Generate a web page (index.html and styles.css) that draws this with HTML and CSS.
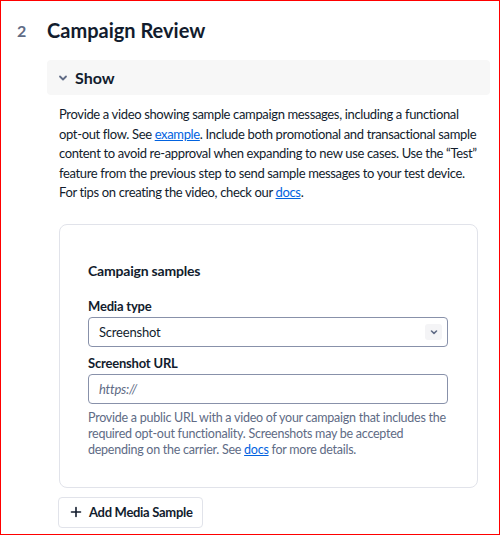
FILE: index.html
```html
<!DOCTYPE html>
<html>
<head>
<meta charset="utf-8">
<link rel="stylesheet" href="styles.css">
</head>
<body>
<div class="frame">
  <div class="step">
    <div class="step-num">2</div>
    <div class="step-body">
      <h2 class="step-title">Campaign Review</h2>
      <div class="disclosure">
        <svg class="chev" width="10" height="10" viewBox="0 0 10 10"><path d="M2 3.5 L5 6.5 L8 3.5" fill="none" stroke="#606b85" stroke-width="1.8" stroke-linecap="round" stroke-linejoin="round"/></svg>
        <span class="disclosure-label">Show</span>
      </div>
      <div class="content">
        <p class="intro">Provide a video showing sample campaign messages, including a functional opt-out flow. See <a href="#">example</a>. Include both promotional and transactional sample content to avoid re-approval when expanding to new use cases. Use the “Test” feature from the previous step to send sample messages to your test device. For tips on creating the video, check our <a href="#">docs</a>.</p>
        <div class="card">
          <div class="card-title">Campaign samples</div>
          <label class="label">Media type</label>
          <div class="select">
            <span>Screenshot</span>
            <span class="select-chev"><svg width="10" height="10" viewBox="0 0 10 10"><path d="M2.5 4 L5 6.3 L7.5 4" fill="none" stroke="#606b85" stroke-width="1.6" stroke-linecap="round" stroke-linejoin="round"/></svg></span>
          </div>
          <label class="label label-2">Screenshot URL</label>
          <div class="input"><span class="placeholder">https://</span></div>
          <p class="help">Provide a public URL with a video of your campaign that includes the required opt-out functionality. Screenshots may be accepted depending on the carrier. See <a href="#">docs</a> for more details.</p>
        </div>
        <button class="btn"><svg width="12" height="12" viewBox="0 0 12 12"><path d="M6 1.5 V10.5 M1.5 6 H10.5" stroke="#121c2d" stroke-width="1.6" stroke-linecap="round"/></svg><span>Add Media Sample</span></button>
      </div>
    </div>
  </div>
</div>
</body>
</html>
```
FILE: styles.css
```css
* { box-sizing: border-box; }
html, body { margin: 0; padding: 0; }
body { font-family: Lato, "Liberation Sans", sans-serif; color: #121c2d; }
.frame {
  width: 500px;
  height: 535px;
  border: 1px solid #ff0000;
  overflow: hidden;
  padding: 14px 9px 0 16px;
}
.step { display: flex; }
.step-num {
  width: 30px;
  font-size: 16px;
  font-weight: 700;
  color: #606b85;
  padding-top: 6px;
}
.step-body { flex: 1; }
.step-title {
  margin: 0;
  font-size: 20px;
  font-weight: 700;
  line-height: 30px;
  color: #121c2d;
}
.disclosure {
  margin-top: 15px;
  height: 35px;
  background: #f7f7f7;
  border-radius: 4px;
  display: flex;
  align-items: center;
  padding-left: 11px;
  gap: 7px;
}
.chev { display: block; }
.disclosure-label { font-size: 16px; font-weight: 700; }
.content { padding-left: 12px; padding-right: 12px; }
.intro {
  margin: 10px 0 0;
  font-size: 13px;
  letter-spacing: -0.35px;
  line-height: 19.6px;
  color: #121c2d;
}
a { color: #0263e0; text-decoration: underline; }
.card {
  margin-top: 21px;
  border: 1px solid #e1e3ea;
  border-radius: 8px;
  padding: 36px 29px 29px 28px;
}
.card-title { font-size: 14px; font-weight: 700; line-height: 20px; letter-spacing: -0.2px; }
.label { display: block; font-size: 13px; font-weight: 700; line-height: 20px; margin-top: 15px; margin-bottom: 1px; letter-spacing: -0.2px; }
.label-2 { margin-top: 6px; }
.select, .input {
  height: 30px;
  border: 1px solid #8891aa;
  border-radius: 4px;
  display: flex;
  align-items: center;
  justify-content: space-between;
  padding: 0 5px 0 10px;
  font-size: 13px;
  letter-spacing: -0.2px;
}
.select-chev {
  width: 17px;
  height: 16px;
  background: #f4f4f6;
  border-radius: 3px;
  display: flex;
  align-items: center;
  justify-content: center;
}
.placeholder { font-style: italic; color: #606b85; }
.help {
  margin: 6px 0 0;
  font-size: 12.5px;
  letter-spacing: -0.25px;
  line-height: 16px;
  color: #606b85;
}
.btn {
  margin-top: 9px;
  margin-left: -1px;
  height: 31px;
  padding: 0 9px 0 11px;
  background: #fff;
  border: 1px solid #e1e3ea;
  border-radius: 4px;
  display: inline-flex;
  align-items: center;
  gap: 7px;
  font-family: inherit;
  font-size: 13px;
  letter-spacing: -0.3px;
  font-weight: 700;
  color: #121c2d;
}
```
